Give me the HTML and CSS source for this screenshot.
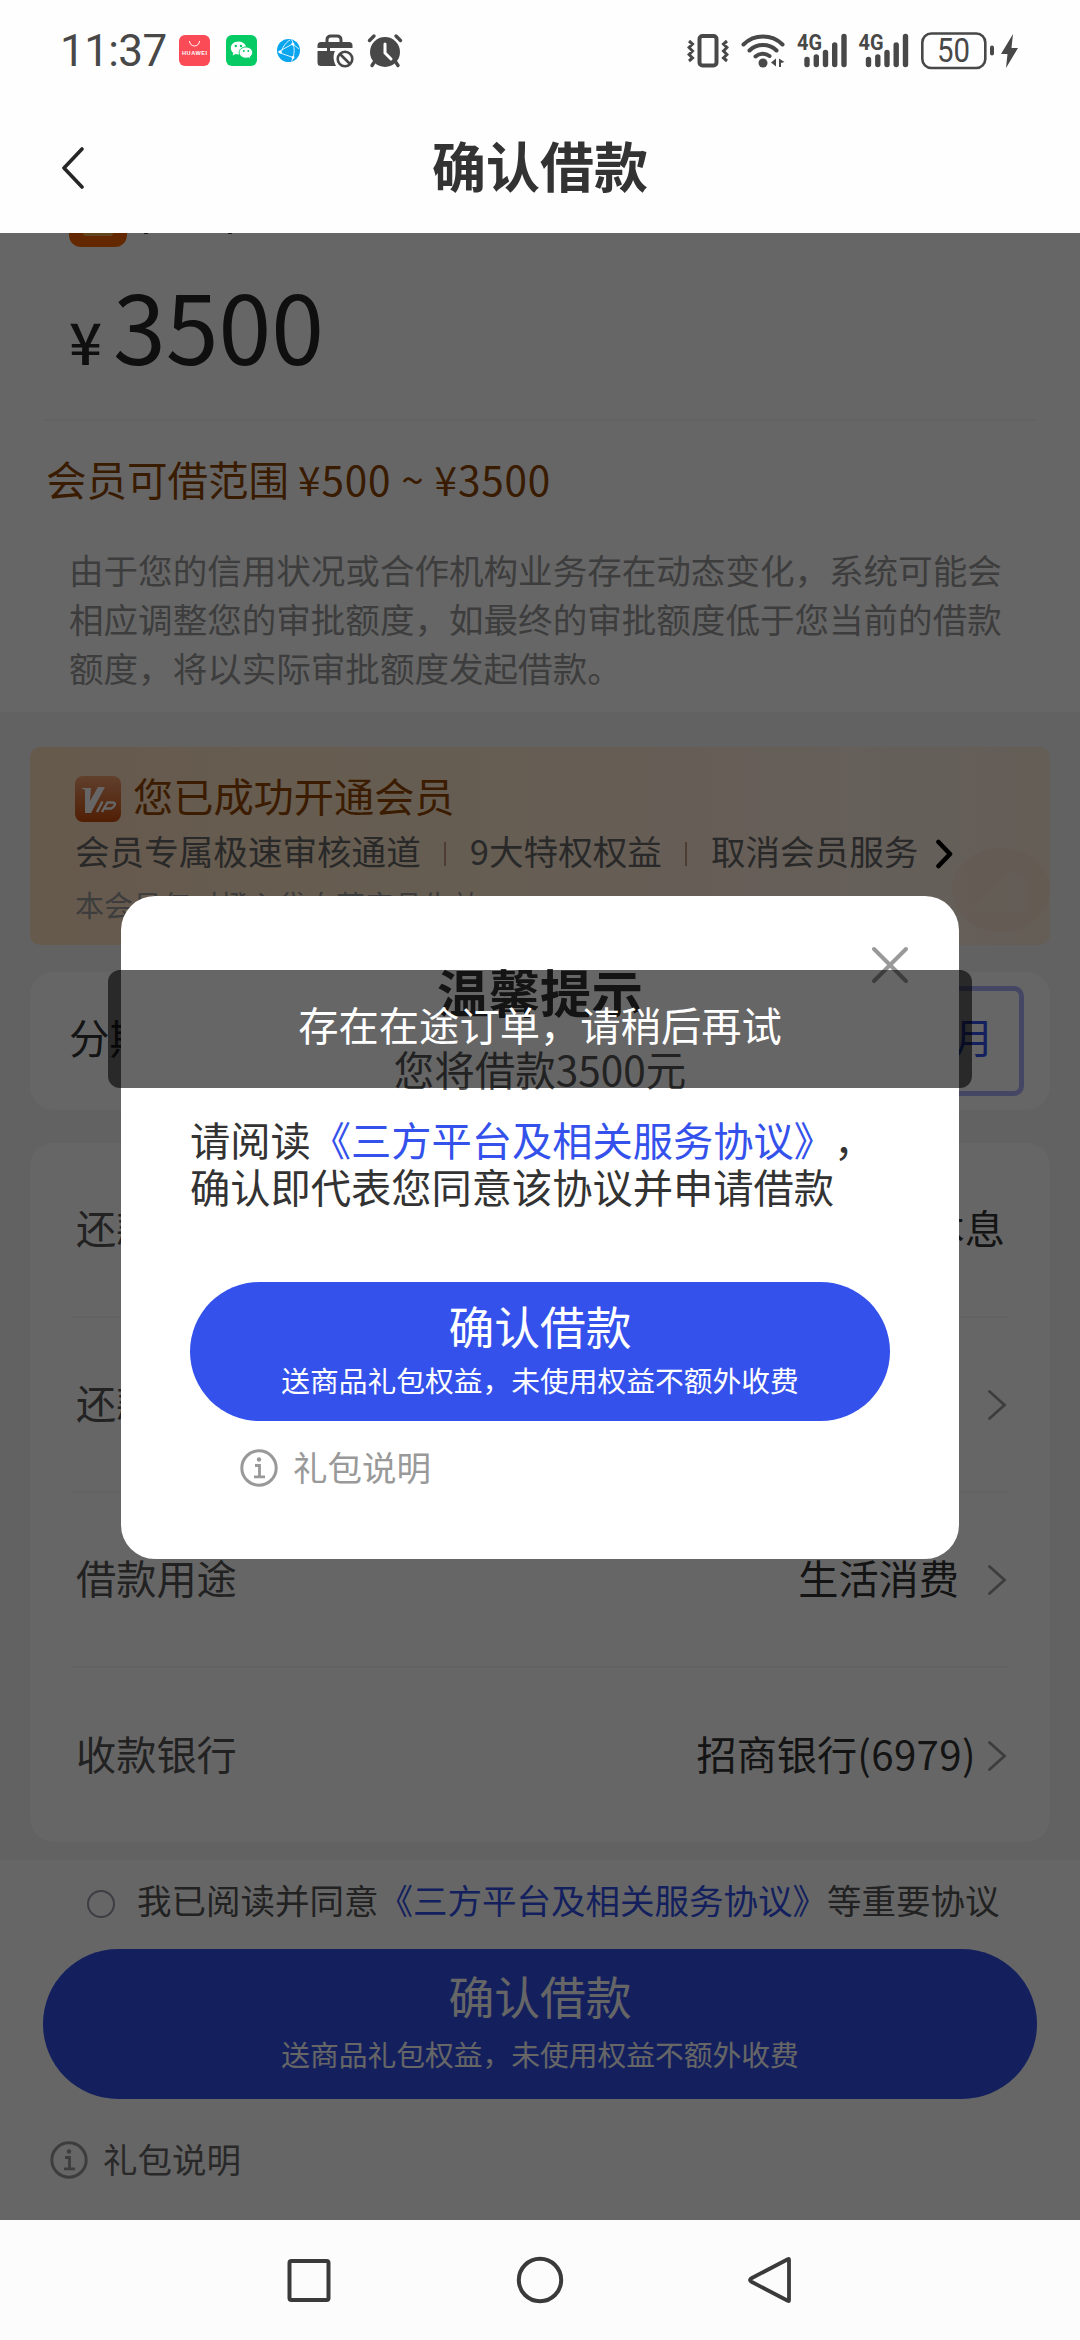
FILE: index.html
```html
<!DOCTYPE html>
<html lang="zh-CN">
<head>
<meta charset="utf-8">
<title>确认借款</title>
<link rel="stylesheet" href="styles.css">
</head>
<body>
<div class="phone">
  <header class="header">
    <div class="status">
      <span class="time">11:37</span>
      <svg class="s-hw" width="31" height="40" viewBox="0 0 31 40">
        <rect y="5" width="31" height="31" rx="6" fill="#fb4b57"/>
        <path d="M10.5 11a5 5 0 0 0 10 0" fill="none" stroke="#fff" stroke-width="1"/>
        <text x="15.5" y="25" font-size="5.6" text-anchor="middle" textLength="25" fill="#fff" class="hw-label">HUAWEI</text>
      </svg>
      <svg class="s-wx" width="31" height="40" viewBox="0 0 31 40">
        <rect y="5" width="31" height="31" rx="6" fill="#06ca64"/>
        <path d="M12.5 11.500c-4.500 0-7.700 2.900-7.700 6.500 0 2 1 3.800 2.600 5l-.8 2.600 3-1.500c1 .3 1.900.4 2.900.4 4.500 0 7.800-3 7.800-6.500s-3.300-6.500-7.800-6.500z" fill="#fff"/>
        <path d="M20 17c-3.900 0-6.800 2.500-6.800 5.600s2.900 5.600 6.800 5.600c.9 0 1.700-.1 2.500-.4l2.300 1.300-.6-2.200c1.500-1 2.400-2.600 2.400-4.300 0-3.100-2.900-5.600-6.600-5.600z" fill="#fff" stroke="#06ca64" stroke-width="1"/>
        <g fill="#06ca64"><circle cx="9.800" cy="16" r="1.200"/><circle cx="15" cy="16" r="1.200"/><circle cx="17.800" cy="21" r="1"/><circle cx="22.300" cy="21" r="1"/></g>
      </svg>
      <svg class="s-globe" width="23" height="40" viewBox="0 0 23 40">
        <circle cx="11.500" cy="20.500" r="11.500" fill="#0aa5ef"/>
        <path d="M14.500 9.500C18 16 18 25 14.500 31.500M1 22 15.500 14M2 22.500 16 27.500M4 24c1-6 4-11 9-14M16 14l6 5" fill="none" stroke="#d8f3ff" stroke-width="1"/>
        <g fill="#fff"><circle cx="3" cy="22" r="1.300"/><circle cx="15.800" cy="14" r="1.500"/><circle cx="16" cy="27.500" r="1.400"/></g>
      </svg>
      <svg class="s-case" width="38" height="40" viewBox="0 0 38 40">
        <path d="M10 14V10q0-4 4-4h6q4 0 4 4v4" fill="none" stroke="#484848" stroke-width="3"/>
        <path d="M4 12h28q3.500 0 3.500 3.500V18H.5v-2.500Q.5 12 4 12zM.5 21H18c-2 4-2 9 1 15H4Q.5 36 .5 32.500z" fill="#484848"/>
        <rect x="10" y="18" width="3" height="5" fill="#484848"/>
        <circle cx="28" cy="29" r="9.500" fill="#fefefe"/>
        <circle cx="28" cy="29" r="7.300" fill="none" stroke="#484848" stroke-width="2.600"/>
        <path d="M23 24l10 10" stroke="#484848" stroke-width="2.600"/>
      </svg>
      <svg class="s-alarm" width="36" height="40" viewBox="0 0 36 40">
        <g fill="none" stroke="#484848" stroke-width="3.400" stroke-linecap="round"><path d="M2.500 10.500 7 6M33.500 10.500 29 6M8 31l-3 4.500M28 31l3 4.500"/></g>
        <circle cx="18" cy="22" r="15" fill="#484848"/>
        <path d="M18 14v9l6 6" fill="none" stroke="#fff" stroke-width="3" stroke-linecap="round"/>
      </svg>
      <svg class="s-vib" width="42" height="40" viewBox="0 0 42 40">
        <rect x="12.500" y="6" width="17" height="29.500" rx="3" fill="none" stroke="#484848" stroke-width="4"/>
        <path d="M2 11l3.500 3L2 17.500 5.500 21 2 24.500 5.500 28 2 31M40 11l-3.500 3 3.500 3.500-3.500 3.500 3.500 3.500-3.500 3.500 3.500 3" fill="none" stroke="#484848" stroke-width="3"/>
      </svg>
      <svg class="s-wifi" width="44" height="40" viewBox="0 0 44 40">
        <g fill="none" stroke="#484848" stroke-width="4" stroke-linecap="round"><path d="M2.500 14.500a28 28 0 0 1 39 0M8.500 20.500a19.500 19.500 0 0 1 27 0M14.500 26.500a11 11 0 0 1 14 -.5"/></g>
        <circle cx="22" cy="33" r="4.500" fill="#484848"/>
        <path d="M35 28.500v8l-5-4zM38 28.500l5.500 3.500-3.500 1v4h-2z" fill="#484848"/>
      </svg>
      <svg class="s-sig" width="50" height="40" viewBox="0 0 50 40">
        <text x="0" y="20" font-size="22" textLength="25" lengthAdjust="spacingAndGlyphs" class="sig-label">4G</text>
        <g stroke="#484848" stroke-width="5.400" stroke-linecap="round"><path d="M10 29.500v5M19.300 27v7.500M28.500 22.500v12M37.700 15v19.500M47 6.500v28"/></g>
      </svg>
      <svg class="s-sig2" width="51" height="40" viewBox="0 0 50 40">
        <text x="0" y="20" font-size="22" textLength="25" lengthAdjust="spacingAndGlyphs" class="sig-label">4G</text>
        <g stroke="#484848" stroke-width="5.400" stroke-linecap="round"><path d="M10 29.500v5M19.300 27v7.500M28.500 22.500v12M37.700 15v19.500M47 6.500v28"/></g>
      </svg>
      <svg class="s-bat" width="73" height="40" viewBox="0 0 73 40">
        <rect x="1.300" y="3.500" width="63" height="34.500" rx="9" fill="none" stroke="#484848" stroke-width="2.600"/>
        <rect x="69" y="15.500" width="4" height="10" rx="2" fill="#484848"/>
        <text x="32.500" y="32" font-size="32.500" text-anchor="middle" textLength="33" lengthAdjust="spacingAndGlyphs" class="bat-label">50</text>
      </svg>
      <svg class="s-bolt" width="17" height="40" viewBox="0 0 17 40">
        <path d="M12 4 0 24h6.500L5 38 17 18h-6.500z" fill="#484848"/>
      </svg>
    </div>
    <div class="titlebar">
      <svg class="back" width="24" height="42" viewBox="0 0 24 42"><path d="M21 2 3 21l18 19" fill="none" stroke="#262626" stroke-width="3.600" stroke-linecap="round" stroke-linejoin="round"/></svg>
      <h1>确认借款</h1>
    </div>
  </header>

  <main class="content">
    <section class="hero">
      <div class="product"><span class="logo"><i></i></span><b></b><b class="second"></b></div>
      <div class="amount"><span class="yen">¥</span><span class="num">3500</span></div>
      <div class="line"></div>
      <div class="range">会员可借范围 <span>¥500 ~ ¥3500</span></div>
      <p class="notice">由于您的信用状况或合作机构业务存在动态变化，系统可能会<br>相应调整您的审批额度，如最终的审批额度低于您当前的借款<br>额度，将以实际审批额度发起借款。</p>
    </section>

    <section class="cards">
      <div class="vip">
        <svg class="vip-deco" width="330" height="110" viewBox="0 0 330 110">
          <ellipse cx="281" cy="55" rx="49" ry="42" fill="#e6c0a0" opacity=".16"/>
          <path d="M258 78q-10-4 2-14l24-24q10-9 20 2l6 22q4 14-10 14z" fill="#fff" opacity=".12"/>
        </svg>
        <div class="vip-title">
          <svg width="46" height="46" viewBox="0 0 46 46">
            <defs><linearGradient id="vg" x1="0" y1="0" x2="0" y2="1"><stop offset="0" stop-color="#f0a070"/><stop offset="1" stop-color="#c94d0c"/></linearGradient></defs>
            <rect width="46" height="46" rx="8" fill="url(#vg)"/>
            <path d="M6 12h10l-1 13 8-14h7L16 37h-6L10 14z" fill="#fff"/>
            <path d="M27.500 25.500 22 36M27 36l5.500-9.500H38q3 .5 1.500 3T36 32.500h-6" fill="none" stroke="#fff" stroke-width="2.400"/>
          </svg>
          <span>您已成功开通会员</span>
        </div>
        <div class="vip-links">
          <span>会员专属极速审核通道</span><i></i><span>9大特权权益</span><i></i><span>取消会员服务</span>
          <svg width="17" height="30" viewBox="0 0 17 30"><path d="M2.500 3 14 15 2.500 27" fill="none" stroke="#000" stroke-width="4.600" stroke-linecap="round" stroke-linejoin="round"/></svg>
        </div>
        <div class="vip-note">本会员仅对橙心贷自营产品生效</div>
      </div>

      <div class="card term"><span>分期期数</span><span class="month">12个月</span></div>

      <div class="card list">
        <div class="row"><span>还款方式</span><em class="flush">到期还本息</em></div>
        <div class="row"><span>还款计划</span><em></em><svg width="20" height="32" viewBox="0 0 20 32"><path d="M2.500 2.500 17.500 16l-15 13.500" fill="none" stroke="#999" stroke-width="2.800" stroke-linecap="round"/></svg></div>
        <div class="row"><span>借款用途</span><em>生活消费</em><svg width="20" height="32" viewBox="0 0 20 32"><path d="M2.500 2.500 17.500 16l-15 13.500" fill="none" stroke="#999" stroke-width="2.800" stroke-linecap="round"/></svg></div>
        <div class="row"><span>收款银行</span><em class="bank">招商银行<span>(6979)</span></em><svg width="20" height="32" viewBox="0 0 20 32"><path d="M2.500 2.500 17.500 16l-15 13.500" fill="none" stroke="#999" stroke-width="2.800" stroke-linecap="round"/></svg></div>
      </div>
    </section>

    <footer class="footer">
      <div class="agree"><span class="radio"></span><span>我已阅读并同意<a>《三方平台及相关服务协议》</a>等重要协议</span></div>
      <div class="btn wide"><strong>确认借款</strong><small>送商品礼包权益，未使用权益不额外收费</small></div>
      <div class="gift">
        <svg width="38" height="38" viewBox="0 0 38 38"><circle cx="19" cy="19" r="17.200" fill="none" stroke="#999" stroke-width="3"/><circle cx="19" cy="10.500" r="2.200" fill="#999"/><path d="M15 16.500h4.500V27M14 27.800h11" fill="none" stroke="#999" stroke-width="2.800"/></svg>
        <span>礼包说明</span>
      </div>
    </footer>

    <div class="overlay">
      <div class="modal">
        <svg class="close" width="38" height="38" viewBox="0 0 38 38"><path d="M3 3l32 32M35 3 3 35" stroke="#999" stroke-width="4" stroke-linecap="round"/></svg>
        <h2>温馨提示</h2>
        <div class="sub">您将借款3500元</div>
        <p class="terms">请阅读<a>《三方平台及相关服务协议》</a>，<br>确认即代表您同意该协议并申请借款</p>
        <div class="btn"><strong>确认借款</strong><small>送商品礼包权益，未使用权益不额外收费</small></div>
        <div class="gift">
          <svg width="38" height="38" viewBox="0 0 38 38"><circle cx="19" cy="19" r="17.200" fill="none" stroke="#999" stroke-width="3"/><circle cx="19" cy="10.500" r="2.200" fill="#999"/><path d="M15 16.500h4.500V27M14 27.800h11" fill="none" stroke="#999" stroke-width="2.800"/></svg>
          <span>礼包说明</span>
        </div>
      </div>
      <div class="toast">存在在途订单，请稍后再试</div>
    </div>
  </main>

  <nav class="nav">
    <svg width="48" height="48" viewBox="0 0 48 48"><rect x="4.500" y="5" width="39" height="39" rx="2" fill="none" stroke="#3a3a3a" stroke-width="4"/></svg>
    <svg width="48" height="48" viewBox="0 0 48 48"><circle cx="24" cy="24" r="21.200" fill="none" stroke="#3a3a3a" stroke-width="4"/></svg>
    <svg width="48" height="48" viewBox="0 0 48 48"><path d="M42 3.500v41q0 1-1.200.2L4 25.500q-2-1.500 0-3L40.800 3.300Q42 2.500 42 3.500z" fill="none" stroke="#3a3a3a" stroke-width="3.800" stroke-linejoin="round"/></svg>
  </nav>
</div>
</body>
</html>
```

FILE: styles.css
```css
* { box-sizing: border-box; margin: 0; padding: 0; }
body { font-family: "Noto Sans CJK SC", sans-serif; background: #fefefe; color: #333; text-spacing-trim: space-all; }
svg { display: block; flex: none; }
i, em { font-style: normal; }
a { color: #3452eb; text-decoration: none; }
.phone { width: 1080px; height: 2340px; display: flex; flex-direction: column; overflow: hidden; }

/* status bar and title */
.header { height: 233px; flex: none; background: #fefefe; }
.status { height: 90px; padding: 31px 62px 0 60px; display: flex; align-items: flex-start; }
.time { width: 119px; font: 400 44px/40px Roboto, sans-serif; letter-spacing: -0.6px; color: #484848; white-space: nowrap; }
.status svg { margin-top: -1px; }
.s-wx { margin-left: 16px; }
.s-globe { margin-left: 20px; }
.s-case { margin-left: 17px; }
.s-alarm { margin-left: 12px; }
.s-vib { margin-left: auto; }
.s-wifi, .s-sig, .s-bat { margin-left: 12px; }
.s-sig2 { margin-left: 11px; }
.s-bolt { margin-left: 7px; }
.hw-label { font-family: "Liberation Sans", sans-serif; font-weight: bold; }
.sig-label { font-family: Roboto, sans-serif; font-weight: 700; fill: #484848; }
.bat-label { font-family: Roboto, sans-serif; fill: #484848; }
.titlebar { height: 143px; padding: 0 61px; display: grid; grid-template-columns: 24px 1fr 24px; align-items: start; }
.back { margin-top: 57px; }
.titlebar h1 { margin-top: 35px; font-size: 54px; line-height: 80px; font-weight: 700; text-align: center; }

/* page beneath the dialog */
.content { position: relative; height: 1987px; flex: none; overflow: hidden; }
.hero { height: 479px; background: #fff; }
.product { height: 14px; padding-left: 69px; display: flex; }
.logo { width: 58px; height: 14px; border-radius: 0 0 12px 12px; background: #f96400; display: flex; justify-content: center; }
.logo i { width: 30px; height: 3px; border-radius: 0 0 8px 8px; background: #f5b050; }
.product b { width: 4px; height: 1px; margin-left: 17px; background: #444; }
.product .second { margin-left: 80px; }
.amount { height: 94px; margin: 30px 0 0 69px; display: flex; align-items: baseline; color: #262626; line-height: 94px; }
.yen { font-size: 58px; font-weight: 500; }
.num { margin-left: 11px; font-size: 95px; }
.line { height: 2px; margin: 48px 43px 0; background: #f8f8f8; }
.range { margin: 34px 0 0 46px; height: 48px; font-size: 40.500px; line-height: 48px; color: #8f4400; white-space: nowrap; }
.range span { letter-spacing: .85px; }
.notice { margin: 42px 0 0 69px; font-size: 34.550px; line-height: 49px; color: #999; white-space: nowrap; }
.cards { height: 1148px; padding: 35px 30px 0; background: #f6f6f6; }
.vip { position: relative; height: 198px; padding: 28px 45px 0; border-radius: 10px; background: linear-gradient(90deg, #ffe0c0, #ffe7c9 30%, #ffebd5 60%, #fdeee2 85%, #fdebd8); }
.vip-deco { position: absolute; right: 0; bottom: 0; }
.vip-title { height: 48px; display: flex; align-items: center; font-size: 40.200px; line-height: 40px; color: #964800; }
.vip-title span { margin-left: 12px; padding-bottom: 8px; }
.vip-links { position: relative; height: 44px; margin-top: 5px; display: flex; align-items: center; font-size: 34.600px; line-height: 44px; color: #666; white-space: nowrap; }
.vip-links i { width: 2px; height: 24px; margin: 8px 24px 0 23px; background: #c49a7a; }
.vip-links svg { margin: 8px 0 0 18px; }
.vip-note { height: 40px; margin-top: 12px; font-size: 29px; line-height: 40px; color: #999; white-space: nowrap; }
.card { background: #fff; border-radius: 24px; }
.term { height: 138px; margin-top: 27px; padding: 0 26px 0 39px; display: flex; align-items: center; justify-content: space-between; font-size: 40.500px; line-height: 60px; }
.term > span:first-child { padding-bottom: 8px; }
.month { width: 200px; height: 110px; padding-right: 25px; border: 5px solid #aab0fa; border-radius: 10px; line-height: 92px; text-align: right; color: #3452eb; }
.list { height: 699px; margin-top: 33px; padding: 0 43px; }
.row { height: 175px; padding-left: 3px; display: flex; align-items: center; border-bottom: 2px solid #f6f6f6; font-size: 40.200px; line-height: 60px; color: #555; }
.row:last-child { border-bottom: 0; }
.row > span, .row em { padding-bottom: 6px; }
.row em { margin-left: auto; padding-right: 28px; color: #333; }
.row em.flush { padding-right: 2px; }
.row em.bank { padding-right: 11px; }
.bank span { letter-spacing: .4px; }
.row svg { margin-right: 0; }
.footer { height: 360px; background: #fff; }
.agree { height: 87px; margin-bottom: 2px; padding-left: 87px; display: flex; align-items: center; font-size: 34.500px; line-height: 50px; color: #555; white-space: nowrap; }
.agree a { color: #3452eb; }
.radio { width: 28px; height: 28px; margin: 0 22px 0 0; border: 2px solid #999aa8; border-radius: 50%; }
.agree span + span { margin-top: -10px; }

/* buttons and gift hint */
.btn { height: 139px; border-radius: 70px; background: #3452eb; color: #fff; display: flex; flex-direction: column; align-items: center; padding-top: 13px; }
.btn strong { font-size: 45.800px; line-height: 60px; font-weight: 400; }
.btn small { font-size: 28.750px; line-height: 40px; margin-top: 5px; }
.wide { height: 150px; margin: 0 43px; border-radius: 75px; padding-top: 16px; }
.wide small { margin-top: 9px; }
.gift { display: flex; align-items: center; font-size: 34.500px; line-height: 38px; color: #999; }
.gift span { padding-bottom: 4px; }
.footer .gift { margin: 40px 0 0 50px; color: #666; }
.footer .gift span { margin-left: 15px; }

/* dialog and toast */
.overlay { position: absolute; inset: 0; background: rgba(0, 0, 0, .6); }
.modal { position: absolute; left: 121px; top: 663px; width: 838px; height: 663px; border-radius: 34px; background: #fff; padding: 60px 69px 0; }
.close { position: absolute; left: 750px; top: 50px; }
.modal h2 { font-size: 51.500px; line-height: 70px; font-weight: 700; text-align: center; color: #333; }
.sub { margin-top: 18px; font-size: 40.500px; line-height: 50px; text-align: center; color: #555; }
.terms { margin-top: 21px; font-size: 40.250px; line-height: 47px; white-space: nowrap; }
.modal .btn { margin-top: 73px; }
.modal .gift { margin: 26px 0 0 50px; }
.modal .gift span { margin-left: 15px; }
.toast { position: absolute; left: 108px; top: 737px; width: 864px; height: 118px; padding-bottom: 8px; border-radius: 12px; background: rgba(0, 0, 0, .6); color: #fff; font-size: 40.300px; line-height: 108px; text-align: center; white-space: nowrap; }

.nav { height: 120px; flex: none; background: #fcfcfc; display: flex; justify-content: center; align-items: center; gap: 183px; }
```
